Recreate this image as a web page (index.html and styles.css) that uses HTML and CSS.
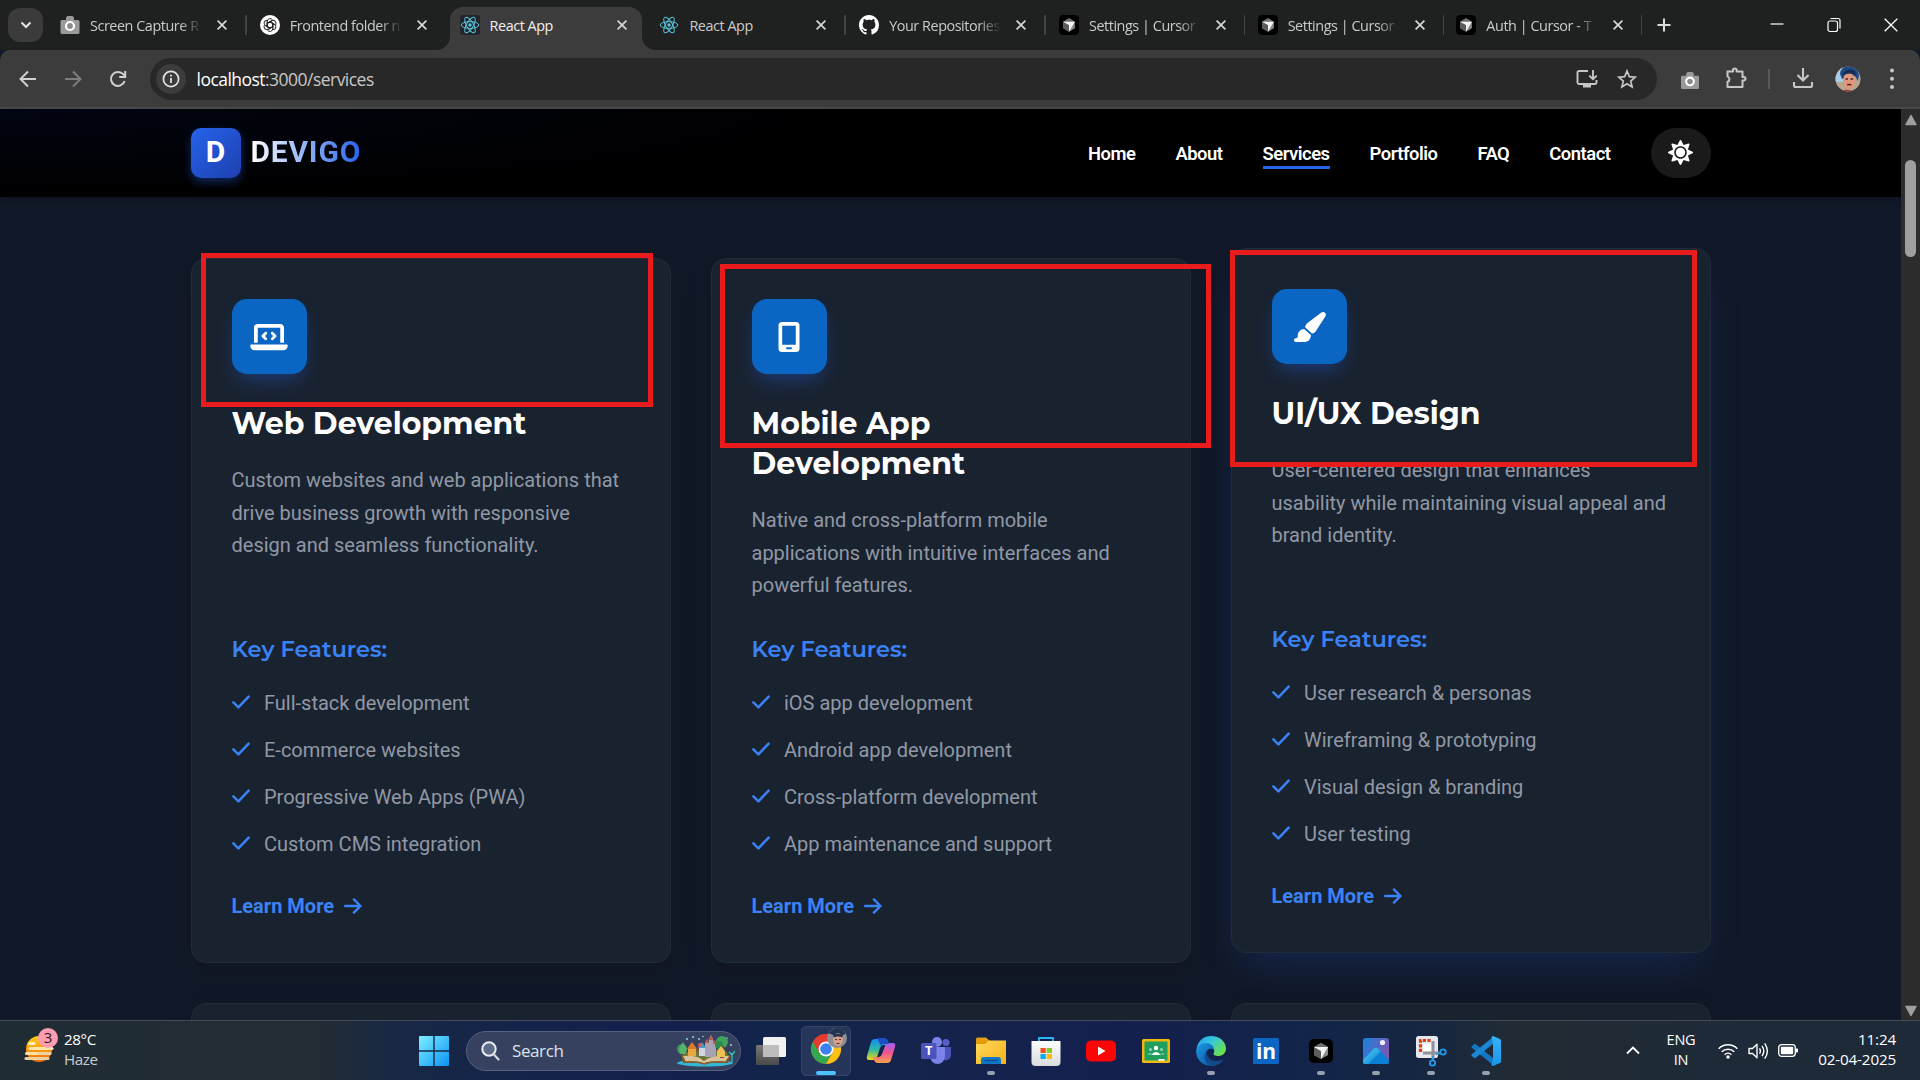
FILE: index.html
```html
<!DOCTYPE html>
<html lang="en">
<head>
<meta charset="utf-8">
<title>React App</title>
<link rel="stylesheet" href="styles.css">
</head>
<body>
<svg class="defs" aria-hidden="true">
  <defs>
    <linearGradient id="win" x1="0" y1="0" x2="1" y2="1"><stop offset="0" stop-color="#7df0ff"/><stop offset="1" stop-color="#0a93f5"/></linearGradient>
    <linearGradient id="haze" x1="0" y1="0" x2="0" y2="1"><stop offset="0" stop-color="#ffcf0e"/><stop offset="1" stop-color="#ee6c10"/></linearGradient>
    <linearGradient id="cpA" x1="0" y1="0" x2="0" y2="1"><stop offset="0" stop-color="#1a8cf0"/><stop offset=".5" stop-color="#2bb9a8"/><stop offset="1" stop-color="#f2d613"/></linearGradient>
    <linearGradient id="cpB" x1="0" y1="0" x2="0" y2="1"><stop offset="0" stop-color="#a25df0"/><stop offset=".5" stop-color="#f0568e"/><stop offset="1" stop-color="#ffa04c"/></linearGradient>
    <linearGradient id="fold" x1="0" y1="0" x2="1" y2="1"><stop offset="0" stop-color="#ffd95e"/><stop offset="1" stop-color="#f5b21a"/></linearGradient>
    <linearGradient id="edgeA" x1="0" y1="0" x2="1" y2=".6"><stop offset="0" stop-color="#1f9fe8"/><stop offset=".5" stop-color="#35c6dd"/><stop offset="1" stop-color="#6be04a"/></linearGradient>
    <linearGradient id="edgeB" x1="0" y1="0" x2="1" y2="1"><stop offset="0" stop-color="#1c9be6"/><stop offset="1" stop-color="#0c4f9e"/></linearGradient>
    <linearGradient id="pho" x1="0" y1="0" x2="1" y2=".4"><stop offset="0" stop-color="#1683dc"/><stop offset="1" stop-color="#7a58b4"/></linearGradient>
    <linearGradient id="phoM" x1="0" y1="0" x2="1" y2="1"><stop offset="0" stop-color="#4fd6fb"/><stop offset="1" stop-color="#0d79cf"/></linearGradient>
    <linearGradient id="bag" x1="0" y1="0" x2="0" y2="1"><stop offset="0" stop-color="#ffffff"/><stop offset="1" stop-color="#d9dadd"/></linearGradient>
    <linearGradient id="vs" x1="0" y1="0" x2="0" y2="1"><stop offset="0" stop-color="#35b5fb"/><stop offset="1" stop-color="#1c94e8"/></linearGradient>
    <linearGradient id="tvA" x1="0" y1="0" x2="0" y2="1"><stop offset="0" stop-color="#777"/><stop offset="1" stop-color="#4a4a4a"/></linearGradient>
  </defs>
  <symbol id="i-x" viewBox="0 0 12 12"><path d="M1.600 1.600l8.800 8.800M10.400 1.600l-8.800 8.800" stroke="currentColor" stroke-width="1.700" fill="none"/></symbol>
  <symbol id="i-camera" viewBox="0 0 20 20"><path d="M2 5h4V2.500L7.500 1h5L14 2.500V5h4a1.500 1.500 0 0 1 1.500 1.500v11A1.500 1.500 0 0 1 18 19H2a1.500 1.500 0 0 1-1.500-1.500v-11A1.500 1.500 0 0 1 2 5z" fill="#9a9a9a"/><circle cx="10" cy="11" r="4" fill="#8a8a8a" stroke="#fff" stroke-width="2.200"/></symbol>
  <symbol id="i-gpt" viewBox="0 0 20 20"><circle cx="10" cy="10" r="10" fill="#fff"/><g fill="none" stroke="#222" stroke-width="1"><path id="petal" d="M7.200 11.600V6.400a2.900 2.900 0 0 1 5.400-1.400M7.200 8.400L10 6.800l4.500 2.600"/><use href="#petal" transform="rotate(60 10 10)"/><use href="#petal" transform="rotate(120 10 10)"/><use href="#petal" transform="rotate(180 10 10)"/><use href="#petal" transform="rotate(240 10 10)"/><use href="#petal" transform="rotate(300 10 10)"/></g></symbol>
  <symbol id="i-react" viewBox="0 0 20 20"><g fill="none" stroke="#58c4dc" stroke-width="1"><ellipse cx="10" cy="10" rx="8.800" ry="3.400"/><ellipse cx="10" cy="10" rx="8.800" ry="3.400" transform="rotate(60 10 10)"/><ellipse cx="10" cy="10" rx="8.800" ry="3.400" transform="rotate(120 10 10)"/></g><circle cx="10" cy="10" r="1.700" fill="#58c4dc"/></symbol>
  <symbol id="i-github" viewBox="0 0 16 16"><path fill="#fff" d="M8 0C3.580 0 0 3.580 0 8c0 3.540 2.290 6.530 5.470 7.590.4.070.55-.17.55-.38 0-.19-.01-.82-.01-1.490-2.010.37-2.530-.49-2.690-.94-.09-.23-.48-.94-.82-1.130-.28-.15-.68-.52-.01-.53.63-.01 1.080.58 1.230.82.72 1.210 1.870.87 2.330.66.070-.52.28-.87.51-1.070-1.780-.2-3.640-.89-3.640-3.950 0-.87.31-1.590.82-2.150-.08-.2-.36-1.020.08-2.120 0 0 .67-.21 2.200.82.64-.18 1.320-.27 2-.27s1.360.09 2 .27c1.530-1.040 2.200-.82 2.200-.82.44 1.100.16 1.920.08 2.120.51.56.82 1.270.82 2.150 0 3.070-1.870 3.750-3.650 3.950.29.25.54.73.54 1.480 0 1.070-.01 1.930-.01 2.200 0 .21.15.46.55.38A8.010 8.010 0 0 0 16 8c0-4.420-3.580-8-8-8z"/></symbol>
  <symbol id="i-cursor" viewBox="0 0 24 24"><rect width="24" height="24" rx="5" fill="#000"/><path d="M12 4l7 4v8l-7 4-7-4V8z" fill="#8b8b8b"/><path d="M5 8l7 4v8l-7-4z" fill="#5d5d5d"/><path d="M12 4l7 4H5z" fill="#6f6f6f"/><path d="M5 8h14l-7 12v-8z" fill="#f3f3f3"/></symbol>
  <symbol id="i-check" viewBox="0 0 18 14"><path d="M1.400 7.300l5 5L16.600 1.600" stroke="#3b82f6" stroke-width="2.500" stroke-linecap="round" stroke-linejoin="round" fill="none"/></symbol>
  <symbol id="i-arrow" viewBox="0 0 18 16"><path d="M1.200 8h15.200M9.900 1.400L16.500 8l-6.600 6.600" stroke="#3b82f6" stroke-width="2.400" stroke-linecap="round" stroke-linejoin="round" fill="none"/></symbol>
</svg>

<div class="tabstrip">
  <button class="tab-search"><svg width="12" height="8" viewBox="0 0 12 8"><path d="M1.500 1.500L6 6l4.500-4.500" stroke="#e3e3e3" stroke-width="2" fill="none"/></svg></button>
  <div class="tabs">
    <div class="tab sep"><svg class="fav"><use href="#i-camera"/></svg><span class="ttl">Screen Capture R</span><svg class="x"><use href="#i-x"/></svg></div>
    <div class="tab"><svg class="fav"><use href="#i-gpt"/></svg><span class="ttl">Frontend folder n</span><svg class="x"><use href="#i-x"/></svg></div>
    <div class="tab active"><svg class="fav dark"><use href="#i-react"/></svg><span class="ttl short">React App</span><svg class="x"><use href="#i-x"/></svg></div>
    <div class="tab sep"><svg class="fav"><use href="#i-react"/></svg><span class="ttl short">React App</span><svg class="x"><use href="#i-x"/></svg></div>
    <div class="tab sep"><svg class="fav"><use href="#i-github"/></svg><span class="ttl">Your Repositories</span><svg class="x"><use href="#i-x"/></svg></div>
    <div class="tab sep"><svg class="fav"><use href="#i-cursor"/></svg><span class="ttl">Settings | Cursor</span><svg class="x"><use href="#i-x"/></svg></div>
    <div class="tab sep"><svg class="fav"><use href="#i-cursor"/></svg><span class="ttl">Settings | Cursor</span><svg class="x"><use href="#i-x"/></svg></div>
    <div class="tab sep"><svg class="fav"><use href="#i-cursor"/></svg><span class="ttl">Auth | Cursor - T</span><svg class="x"><use href="#i-x"/></svg></div>
  </div>
  <svg class="newtab" width="14" height="14" viewBox="0 0 14 14"><path d="M7 .5v13M.5 7h13" stroke="#dcdcdc" stroke-width="2"/></svg>
  <div class="winctl">
    <svg width="14" height="14" viewBox="0 0 14 14"><path d="M.5 6h13" stroke="#fff" stroke-width="1.200"/></svg>
    <svg width="14" height="16" viewBox="0 0 14 16"><rect x="1" y="4" width="9.500" height="10.500" rx="2" stroke="#fff" stroke-width="1.200" fill="none"/><path d="M3.500 1.500H11a2 2 0 0 1 2 2v8" stroke="#fff" stroke-width="1.200" fill="none"/></svg>
    <svg width="14" height="14" viewBox="0 0 14 14"><path d="M.7.7l12.600 12.600M13.300.7L.7 13.300" stroke="#fff" stroke-width="1.300"/></svg>
  </div>
</div>

<div class="toolbar">
  <div class="navbtns">
    <svg width="18" height="18" viewBox="0 0 18 18"><path d="M17 9H2M9 1.500L1.500 9 9 16.500" stroke="#d0d0d0" stroke-width="2" fill="none"/></svg>
    <svg width="18" height="18" viewBox="0 0 18 18"><path d="M1 9h15M9 1.500L16.500 9 9 16.500" stroke="#7d7d7d" stroke-width="2" fill="none"/></svg>
    <svg width="18" height="18" viewBox="0 0 18 18"><path d="M15.600 11.200A7 7 0 1 1 14.200 4.200l1.800 2" stroke="#d0d0d0" stroke-width="2" fill="none"/><path d="M16.200 1v6h-6" stroke="#d0d0d0" stroke-width="2" fill="none"/></svg>
  </div>
  <div class="omnibox">
    <span class="info"><svg width="18" height="18" viewBox="0 0 18 18"><circle cx="9" cy="9" r="7.600" stroke="#e3e3e3" stroke-width="1.700" fill="none"/><path d="M9 8v5M9 4.700v1.900" stroke="#e3e3e3" stroke-width="1.800"/></svg></span>
    <span class="url"><b>localhost</b>:3000/services</span>
    <svg class="install" width="22" height="20" viewBox="0 0 22 20"><path d="M12 2H3a1.500 1.500 0 0 0-1.500 1.500v10A1.500 1.500 0 0 0 3 15h16a1.500 1.500 0 0 0 1.500-1.500V11M17 1v9M13.300 6.600L17 10.200l3.700-3.600" stroke="#c7c7c7" stroke-width="1.900" fill="none"/><path d="M7 15h8v3.500H7z" fill="#c7c7c7"/></svg>
    <svg width="20" height="20" viewBox="0 0 20 20"><path d="M10 2l2.300 5.600 6 .5-4.600 3.900 1.400 5.900L10 14.800l-5.100 3.100 1.400-5.900L1.700 8.100l6-.5z" stroke="#c7c7c7" stroke-width="1.700" fill="none"/></svg>
  </div>
  <div class="actions">
    <svg class="cam" width="20" height="19" viewBox="0 0 20 20"><use href="#i-camera"/></svg>
    <svg class="puzzle" width="22" height="22" viewBox="0 0 22 22"><path d="M2.500 4.500H8V3.300a1.800 1.800 0 0 1 3.600 0v1.200h5.900V10h1.200a1.800 1.800 0 0 1 0 3.600h-1.200v6.400H2.500v-5.200a2.700 2.700 0 0 0 0-5.200z" stroke="#c7c7c7" stroke-width="2" fill="none" stroke-linejoin="round"/></svg>
    <i class="vsep"></i>
    <svg class="dl" width="22" height="22" viewBox="0 0 22 22"><path d="M11 1v12M5.500 8l5.500 5.500L16.500 8M2 15v3.500A1.500 1.500 0 0 0 3.500 20h15a1.500 1.500 0 0 0 1.500-1.500V15" stroke="#c7c7c7" stroke-width="2.100" fill="none"/></svg>
    <svg class="avatar" width="26" height="26" viewBox="0 0 26 26"><clipPath id="av"><circle cx="13" cy="13" r="12.500"/></clipPath><g clip-path="url(#av)"><rect width="26" height="26" fill="#b9a691"/><path d="M0 0h8v16H0z" fill="#a9cbe6"/><path d="M5 8q1-8 9-8t10 9l-1 6-3-5-13 3z" fill="#1d4a86"/><ellipse cx="14" cy="15" rx="6" ry="8" fill="#e0987c"/><path d="M7 9.500q2-6 8-6t6 6q-6-4-14 0z" fill="#152c55"/><path d="M5 26q4-3 9-2t8 2z" fill="#a2343c"/><path d="M10.500 13H13M15.500 13H18M12 19q2.200-1 4.500 0" stroke="#4a241c" stroke-width="1.300" fill="none"/></g></svg>
    <svg width="6" height="24" viewBox="0 0 6 24"><g fill="#c7c7c7"><circle cx="3" cy="3.500" r="2"/><circle cx="3" cy="11.800" r="2"/><circle cx="3" cy="20" r="2"/></g></svg>
  </div>
</div>

<div class="viewport">
  <div class="page">
    <header class="site-header">
      <div class="wrap">
        <div class="brand"><span class="mark">D</span><span class="name">DEVIGO</span></div>
        <nav class="menu"><a>Home</a><a>About</a><a class="on">Services</a><a>Portfolio</a><a>FAQ</a><a>Contact</a>
          <button class="theme"><svg width="25" height="25" viewBox="0 0 512 512"><path fill="#fff" d="M256 160c-52.900 0-96 43.100-96 96s43.100 96 96 96 96-43.100 96-96-43.100-96-96-96zm246.400 80.500l-94.700-47.300 33.500-100.400c4.500-13.600-8.400-26.500-21.900-21.900l-100.400 33.500-47.400-94.800c-6.400-12.800-24.600-12.800-31 0l-47.300 94.700L92.700 70.800c-13.600-4.500-26.500 8.400-21.900 21.900l33.500 100.400-94.700 47.400c-12.800 6.400-12.800 24.600 0 31l94.700 47.300-33.500 100.500c-4.500 13.600 8.400 26.500 21.900 21.900l100.400-33.500 47.300 94.700c6.400 12.800 24.600 12.800 31 0l47.300-94.700 100.400 33.500c13.600 4.500 26.500-8.400 21.900-21.900l-33.500-100.400 94.700-47.300c13-6.500 13-24.700.2-31.100zm-155.900 106c-49.900 49.900-131.100 49.900-181 0-49.900-49.900-49.900-131.100 0-181 49.900-49.900 131.100-49.900 181 0 49.900 49.900 49.900 131.100 0 181z"/></svg></button>
        </nav>
      </div>
    </header>
    <main class="services">
      <article class="card">
        <div class="ico"><svg width="38" height="30" viewBox="0 0 640 512"><path fill="#fff" d="M64 96c0-35.300 28.700-64 64-64H512c35.300 0 64 28.700 64 64V352H512V96H128V352H64V96zM0 403.200C0 392.600 8.600 384 19.200 384H620.800c10.600 0 19.200 8.600 19.200 19.200c0 42.400-34.400 76.800-76.800 76.800H76.800C34.400 480 0 445.600 0 403.200zM281 209l-31 31 31 31c9.400 9.400 9.400 24.600 0 33.900s-24.600 9.400-33.900 0l-48-48c-9.400-9.400-9.400-24.600 0-33.900l48-48c9.400-9.400 24.600-9.400 33.900 0s9.400 24.600 0 33.900zM393 175l48 48c9.400 9.400 9.400 24.600 0 33.900l-48 48c-9.400 9.400-24.600 9.400-33.900 0s-9.400-24.600 0-33.900l31-31-31-31c-9.400-9.400-9.400-24.600 0-33.900s24.600-9.400 33.900 0z"/></svg></div>
        <h3>Web Development</h3>
        <p>Custom websites and web applications that<br>drive business growth with responsive<br>design and seamless functionality.</p>
        <h4>Key Features:</h4>
        <ul>
          <li><svg><use href="#i-check"/></svg>Full-stack development</li>
          <li><svg><use href="#i-check"/></svg>E-commerce websites</li>
          <li><svg><use href="#i-check"/></svg>Progressive Web Apps (PWA)</li>
          <li><svg><use href="#i-check"/></svg>Custom CMS integration</li>
        </ul>
        <a class="more">Learn More <svg><use href="#i-arrow"/></svg></a>
      </article>
      <article class="card">
        <div class="ico"><svg width="22" height="30" viewBox="0 0 22 30"><path fill="#fff" fill-rule="evenodd" d="M4 0h14a3.500 3.500 0 0 1 3.500 3.500v23A3.500 3.500 0 0 1 18 30H4a3.500 3.500 0 0 1-3.500-3.500v-23A3.500 3.500 0 0 1 4 0zm.2 3.700v19h13.600v-19zm4.800 21.600a1 1 0 0 0 0 2h4a1 1 0 0 0 0-2z"/></svg></div>
        <h3>Mobile App<br>Development</h3>
        <p>Native and cross-platform mobile<br>applications with intuitive interfaces and<br>powerful features.</p>
        <h4>Key Features:</h4>
        <ul>
          <li><svg><use href="#i-check"/></svg>iOS app development</li>
          <li><svg><use href="#i-check"/></svg>Android app development</li>
          <li><svg><use href="#i-check"/></svg>Cross-platform development</li>
          <li><svg><use href="#i-check"/></svg>App maintenance and support</li>
        </ul>
        <a class="more">Learn More <svg><use href="#i-arrow"/></svg></a>
      </article>
      <article class="card lifted">
        <div class="ico"><svg width="34" height="30" viewBox="0 0 576 512"><path fill="#fff" d="M339.300 367.100c27.300-3.900 51.900-19.400 67.200-42.900L568.200 74.100c12.600-19.500 9.400-45.300-7.600-61.200S517.700-4.400 499.100 9.600L262.400 187.200c-24 18-38.200 46.100-38.400 76.100L339.300 367.100zm-19.600 25.400l-116-104.400C143.900 290.300 96 339.600 96 400c0 3.900 .2 7.800 .6 11.600C98.400 429.100 86.400 448 68.800 448H64c-17.700 0-32 14.300-32 32s14.300 32 32 32H208c61.900 0 112-50.100 112-112c0-2.500-.1-5-.2-7.500z"/></svg></div>
        <h3>UI/UX Design</h3>
        <p>User-centered design that enhances<br>usability while maintaining visual appeal and<br>brand identity.</p>
        <h4>Key Features:</h4>
        <ul>
          <li><svg><use href="#i-check"/></svg>User research &amp; personas</li>
          <li><svg><use href="#i-check"/></svg>Wireframing &amp; prototyping</li>
          <li><svg><use href="#i-check"/></svg>Visual design &amp; branding</li>
          <li><svg><use href="#i-check"/></svg>User testing</li>
        </ul>
        <a class="more">Learn More <svg><use href="#i-arrow"/></svg></a>
      </article>
      <article class="card"></article>
      <article class="card"></article>
      <article class="card"></article>
    </main>
  </div>
  <div class="scrollbar">
    <svg width="12" height="12" viewBox="0 0 12 12"><path d="M6 1.500L11 10.500H1z" fill="#9f9f9f" stroke="#9f9f9f" stroke-width="1.500" stroke-linejoin="round"/></svg>
    <i class="thumb"></i>
    <svg width="12" height="12" viewBox="0 0 12 12"><path d="M6 10.500L1 1.500h10z" fill="#9f9f9f" stroke="#9f9f9f" stroke-width="1.500" stroke-linejoin="round"/></svg>
  </div>
</div>

<div class="mark-box mb1"></div>
<div class="mark-box mb2"></div>
<div class="mark-box mb3"></div>

<footer class="taskbar">
  <div class="weather">
    <svg width="38" height="40" viewBox="0 0 38 40"><circle cx="17" cy="21" r="13" fill="url(#haze)"/><g fill="none" stroke-width="3.200" stroke-linecap="round"><path d="M8 15.500h4" stroke="#fff1c4"/><path d="M8 20.500h22" stroke="#ffe6a8"/><path d="M8 25.500h20M4 30.500h22" stroke="#ecd0a0"/></g><path d="M4.500 25.500h10" stroke="#ffe1a0" stroke-width="3" stroke-linecap="round"/><circle cx="26" cy="10" r="10" fill="#ff9db0"/><text x="26" y="15.200" text-anchor="middle" class="badge-n">3</text></svg>
    <div class="wx"><span>28°C</span><span class="dim">Haze</span></div>
  </div>
  <svg class="start" width="30" height="30" viewBox="0 0 30 30"><path fill="url(#win)" d="M1 0h13.300v14.300H0V1a1 1 0 0 1 1-1zM15.700 0H29a1 1 0 0 1 1 1v13.300H15.700zM0 15.700h14.300V30H1a1 1 0 0 1-1-1zM15.700 15.700H30V29a1 1 0 0 1-1 1H15.700z"/></svg>
  <div class="search">
    <svg width="19" height="20" viewBox="0 0 19 20"><circle cx="8" cy="8" r="6.700" stroke="#e9ebf2" stroke-width="2" fill="#5d6a88"/><path d="M12.500 13l5 5.500" stroke="#d7dae5" stroke-width="2.200" stroke-linecap="round"/></svg>
    <span>Search</span>
    <svg class="book" width="60" height="32" viewBox="0 0 60 32"><ellipse cx="30" cy="28" rx="28" ry="3.500" fill="#35b8d8"/><path d="M6 20l8-2 8-4h18l10 4 6 3-3 7H8z" fill="#7c5a2f"/><path d="M8 21q12-3 21 5Q38 18 54 21l-4 6q-13-2-21 1-9-3-18-1z" fill="#d9c49a"/><path d="M10 27q11-1 19 2 9-3 22-2" stroke="#8a5f35" stroke-width="1.400" fill="none"/><path d="M8 17h44v4q-14-1-22 4-9-5-22-4z" fill="#6b7a3c"/><path d="M30 22V8l2-4 2 4V4l2-4 2 4v4l1-3 2 4v13z" fill="#a8a3b4"/><path d="M32 4l-2 4h4zM36 0l-2 5h4zM40 5l-2 4h4z" fill="#c9543c"/><circle cx="47" cy="7" r="6" fill="#3fa45a"/><circle cx="44" cy="10" r="4" fill="#2c8a4d"/><path d="M46 11h3v12h-4z" fill="#7b4a2c"/><circle cx="7" cy="14" r="5" fill="#3b9a5c"/><path d="M4 14l4-7 4 7-2 5H5z" fill="#57b26b"/><path d="M13 21v-7l4-6 4 6v7z" fill="#e9a742"/><path d="M12 14l5-7 5 7z" fill="#db7a2b"/><path d="M42 22v-6l4-5 4 5v6z" fill="#f0c253"/><path d="M24 21v-8l3-4 3 4v8z" fill="#cfd5e4"/><path d="M23 13l4-6 4 6z" fill="#4d9ec4"/><g fill="#8ed0f5"><circle cx="12" cy="4" r="1"/><circle cx="18" cy="2" r="1"/><circle cx="24" cy="4" r="1"/><circle cx="28" cy="1.500" r=".8"/><circle cx="56" cy="10" r="1"/><circle cx="52" cy="3" r=".8"/></g><circle cx="25" cy="10" r="2" fill="#e05a4e"/><path d="M57 27v-9M54 17l3 3 3-4" stroke="#2fc7b7" stroke-width="1.300" fill="none"/></svg>
  </div>
  <div class="apps">
    <span class="app"><svg width="32" height="32" viewBox="0 0 32 32"><rect x="1" y="10" width="23" height="20" rx="1.500" fill="url(#tvA)"/><rect x="8" y="2" width="23" height="20" rx="1.500" fill="#f1f1f1"/><path d="M8 10h16v12H8z" fill="#bdbdbd"/></svg></span>
    <span class="app current"><svg width="40" height="40" viewBox="0 0 40 40"><g transform="translate(2 6)"><circle cx="15" cy="15" r="15" fill="#e33b2e"/><path d="M2 7.500A15 15 0 0 0 15 30l6.500-11.200L8.500 18.800z" fill="#34a853"/><path d="M15 30A15 15 0 0 0 28 7.500H15l6.500 11.300z" fill="#fbc116"/><path d="M2 7.500L8.500 18.800 15 7.500h13A15 15 0 0 0 2 7.500z" fill="#e33b2e"/><circle cx="15" cy="15" r="7.500" fill="#fff"/><circle cx="15" cy="15" r="5.800" fill="#3c80f0"/></g><circle cx="28" cy="10" r="10" fill="#8c8f96"/><path d="M19.500 5q4-5 10-5 5 1 7 6l-8 3z" fill="#20334f"/><ellipse cx="29" cy="11.500" rx="5" ry="6.500" fill="#d8a18b"/><path d="M24 7.500q5-4 10 0l-1 2q-4-2-8 0z" fill="#26324f"/><path d="M26 11.500h2M30 11.500h2M27.500 15.500h3" stroke="#5b2c28" stroke-width="1"/></svg></span>
    <span class="app"><svg width="30" height="28" viewBox="0 0 30 28"><path d="M9 2h9q3 0 4 3l1 3h-5q-3 0-4 3l-3 9q-1 3-4 3H3q-3 0-2-4L5 5q1-3 4-3z" fill="url(#cpA)"/><path d="M21 26h-9q-3 0-4-3l-1-3h5q3 0 4-3l3-8q1-3 4-3h4q3 0 2 4l-4 13q-1 3-4 3z" fill="url(#cpB)"/><path d="M11 1h7q3 0 4 3l1 3h-5q-2 0-3 2z" fill="#1b4fc4"/></svg></span>
    <span class="app"><svg width="32" height="30" viewBox="0 0 32 30"><circle cx="26" cy="6.500" r="3.500" fill="#5a5fc8"/><path d="M22 11h9v8a5.500 5.500 0 0 1-9 4z" fill="#4b53bc"/><circle cx="17" cy="6" r="5" fill="#7b83eb"/><path d="M10 11h15v9a7.500 8 0 0 1-15 0z" fill="#7b83eb"/><rect x="1" y="7" width="15.500" height="16" rx="1.500" fill="#4b53bc"/><text x="8.800" y="19.200" text-anchor="middle" class="tm">T</text></svg></span>
    <span class="app run"><svg width="32" height="30" viewBox="0 0 32 30"><path d="M1 3a1.500 1.500 0 0 1 1.500-1.500H11L15 5v6H1z" fill="#e39d0b"/><path d="M1 8h9l4-3.500h17v23.500H1z" fill="url(#fold)"/><path d="M6 28v-4a3 3 0 0 1 3-3h14a3 3 0 0 1 3 3v4z" fill="#0f78c8"/><path d="M9.500 24.500h13" stroke="#0b4f8a" stroke-width="1.500"/></svg></span>
    <span class="app"><svg width="30" height="30" viewBox="0 0 30 30"><path d="M8 7V2h14v5" stroke="#29b4f2" stroke-width="1.800" fill="none"/><path d="M.5 5h29v21a4 4 0 0 1-4 4h-21a4 4 0 0 1-4-4z" fill="url(#bag)"/><path d="M9.500 12h5.300v5H9.500z" fill="#f1511b"/><path d="M15.700 12H21v5h-5.300z" fill="#80cc28"/><path d="M9.500 18h5.300v5H9.500z" fill="#00adef"/><path d="M15.700 18H21v5h-5.300z" fill="#fbbc09"/></svg></span>
    <span class="app"><svg width="30" height="22" viewBox="0 0 30 22"><rect y=".5" width="30" height="21" rx="5" fill="#fb0505"/><path d="M12 6.500l7.500 4.500-7.500 4.500z" fill="#fff"/></svg></span>
    <span class="app"><svg width="28" height="24" viewBox="0 0 28 24"><rect width="28" height="24" rx="1.500" fill="#f3b80c"/><rect x="2.500" y="2.500" width="23" height="19" fill="#1f9e5e"/><circle cx="14" cy="9" r="2.200" fill="#fff"/><circle cx="8.500" cy="10.500" r="1.500" fill="#9ad3b4"/><circle cx="19.500" cy="10.500" r="1.500" fill="#9ad3b4"/><path d="M9 16q5-6 10 0z" fill="#fff"/><path d="M5.500 15.500q2.500-3 4 0zM18.500 15.500q2.500-3 4 0z" fill="#9ad3b4"/><path d="M16.500 20h6v1.800h-6z" fill="#fff"/></svg></span>
    <span class="app run"><svg width="30" height="30" viewBox="0 0 30 30"><path d="M.5 13C2 4 8 0 15 0c9 0 15 6 15 12.500 0 5-4 7.500-8 7.500-3 0-5-1-4.500-2.500 1-2 1-3 0-4.500C15 8 6 7 .5 13z" fill="url(#edgeA)"/><path d="M.1 16C0 10 5 7 10 7c5 0 8 3 8 6.500-5-2-8 1-8 5.500 0 5 4 8.500 9 10.300C9 32 .5 25 .1 16z" fill="url(#edgeB)"/><path d="M11 14.500c-1 7 5 11 10 10.500 3 0 5-1 6.500-2C26 27 21 30 16 30 9 29 6 19 11 14.500z" fill="#114a8b"/></svg></span>
    <span class="app"><svg width="26" height="26" viewBox="0 0 26 26"><rect width="26" height="26" rx="1.500" fill="#0a66c2"/><text x="13" y="21" text-anchor="middle" class="li">in</text></svg></span>
    <span class="app run"><svg width="24" height="24" viewBox="0 0 24 24"><use href="#i-cursor"/></svg></span>
    <span class="app run"><svg width="26" height="26" viewBox="0 0 26 26"><rect width="26" height="26" rx="2.500" fill="url(#pho)"/><path d="M0 22L11 10.500q2-2 4 0L26 22v2a2 2 0 0 1-2 2H2a2 2 0 0 1-2-2z" fill="#0c7fd6"/><path d="M0 22L11 10.500q2-2 4 0l3 3L5 26H2a2 2 0 0 1-2-2z" fill="url(#phoM)"/><circle cx="19.500" cy="4.500" r="2.600" fill="#f4ecff"/></svg></span>
    <span class="app run"><svg width="32" height="32" viewBox="0 0 32 32"><rect x="1" y="1" width="22" height="22" rx="2.500" fill="#e6e8ee"/><path d="M5.500 17V5.500H17" stroke="#d9400e" stroke-width="3.200" stroke-dasharray="3.200 1.400" fill="none"/><path d="M8.500 9h8v8h-8z" fill="#fff"/><path d="M18 6v18M8 18h16" stroke="#8d929b" stroke-width="3"/><circle cx="28" cy="17" r="2.700" fill="none" stroke="#1f9be8" stroke-width="1.800"/><circle cx="17.500" cy="28" r="2.700" fill="none" stroke="#1f9be8" stroke-width="1.800"/><path d="M21 19.500l4.500-1.500M18 25.500V21" stroke="#1f9be8" stroke-width="1.800"/></svg></span>
    <span class="app run"><svg width="30" height="30" viewBox="0 0 30 30"><path d="M.8 10.200l2-2a1.500 1.500 0 0 1 2 0L22 22v7L.8 11.800a1 1 0 0 1 0-1.600z" fill="#1177c4"/><path d="M.8 19.800l2 2a1.500 1.500 0 0 0 2 0L22 8V1L.8 18.200a1 1 0 0 0 0 1.600z" fill="#1a86d4"/><path d="M22 0l7 3q1 .5 1 1.500v21q0 1-1 1.500l-7 3q-1 0-1.500-.7L22 22V8L20.500.7z" fill="url(#vs)"/></svg></span>
  </div>
  <div class="tray">
    <svg width="14" height="9" viewBox="0 0 14 9"><path d="M1 7.500L7 1.500l6 6" stroke="#fff" stroke-width="1.800" fill="none"/></svg>
    <div class="lang"><span>ENG</span><span>IN</span></div>
    <svg class="wifi" width="20" height="16" viewBox="0 0 20 16"><g fill="none" stroke="#fff" stroke-width="1.500"><path d="M.7 5.700a13.200 13.200 0 0 1 18.600 0"/><path d="M3.700 8.800a9 9 0 0 1 12.600 0"/><path d="M6.600 11.700a4.900 4.900 0 0 1 6.800 0"/></g><circle cx="10" cy="14" r="1.700" fill="#fff"/></svg>
    <svg class="snd" width="21" height="18" viewBox="0 0 21 18"><g fill="none" stroke="#fff" stroke-width="1.400"><path d="M1 6.500h3.500L9 2.300v13.400L4.500 11.500H1z" stroke-linejoin="round"/><path d="M11.500 6.300q1.800 2.700 0 5.400M14 3.800q3.600 5.200 0 10.400M16.700 1.300q5.400 7.700 0 15.400"/></g></svg>
    <svg class="bat" width="20" height="13" viewBox="0 0 20 13"><rect x=".7" y=".7" width="16.600" height="11.600" rx="3" fill="none" stroke="#fff" stroke-width="1.300"/><rect x="2.800" y="2.800" width="12.400" height="7.400" rx="1" fill="#fff"/><path d="M18 4.500h1.200q.8 0 .8.800v2.400q0 .8-.8.800H18z" fill="#fff"/></svg>
    <div class="clock"><span>11:24</span><span>02-04-2025</span></div>
  </div>
</footer>
</body>
</html>
```
FILE: styles.css
```css
* { box-sizing: border-box; }
body { margin: 0; width: 1920px; height: 1080px; overflow: hidden; display: flex; flex-direction: column; background: #111827; font-family: Roboto, sans-serif; position: relative; }
button { border: 0; padding: 0; }
.defs { position: absolute; width: 0; height: 0; }

/* browser tabs */
.tabstrip { flex: none; height: 50px; background: #1f2120; display: flex; align-items: center; font-family: "Open Sans", "Noto Sans", sans-serif; padding-left: 8px; }
.tab-search { width: 35px; height: 34px; border-radius: 12px; background: #3b3b3b; display: flex; align-items: center; justify-content: center; }
.tabs { display: flex; align-self: stretch; margin-left: 4px; }
.tab { width: 199.800px; height: 50px; display: flex; align-items: center; padding-left: 13px; color: #c9cbca; position: relative; }
.tab:nth-child(n+6) { width: 198.700px; }
.tab .fav { width: 20px; height: 20px; flex: none; }
.fav.dark { background: #22252a; border-radius: 3px; }
.tab .ttl { flex: none; width: 118px; margin-left: 10px; font-size: 14.400px; letter-spacing: -.45px; line-height: 20px; white-space: nowrap; mask-image: linear-gradient(to right, #000 76%, transparent 95%); padding-top: 1px; }
.tab .ttl.short { mask-image: none; }
.tab .x { flex: none; width: 12px; height: 12px; margin-left: 8px; color: #d5d7d6; }
.tab.sep::after { content: ""; width: 2px; height: 20px; border-radius: 1px; background: #424443; margin-left: 17px; }
.tab.active { color: #f0f0f0; }
.tab.active::before { content: ""; position: absolute; z-index: 0; left: 3px; right: 4px; top: 7px; bottom: 0; background: #3c3c3c; border-radius: 13px 13px 0 0; }
.tab.active::after { content: ""; position: absolute; left: -10px; right: -9px; bottom: 0; height: 13px; background: radial-gradient(circle at 0 0, transparent 12.500px, #3c3c3c 13px) left / 13px 13px no-repeat, radial-gradient(circle at 100% 0, transparent 12.500px, #3c3c3c 13px) right / 13px 13px no-repeat; }
.tab.active > * { position: relative; z-index: 1; }
.newtab { margin-left: 15px; }
.winctl { display: flex; margin-left: auto; margin-right: 22px; gap: 43px; align-items: center; }

/* browser toolbar */
.toolbar { flex: none; height: 59px; background: #3c3c3c; border-bottom: 2px solid #474948; border-radius: 10px 10px 0 0; display: flex; align-items: center; padding: 0 25px 0 19px; }
.navbtns { display: flex; gap: 27px; width: 131px; }
.omnibox { width: 1507px; height: 42px; border-radius: 21px; background: #282828; display: flex; align-items: center; padding: 0 20px 0 6px; }
.info { width: 30px; height: 30px; border-radius: 50%; background: #3c3c3c; display: flex; align-items: center; justify-content: center; }
.url { flex: 1; margin-left: 10.500px; padding-top: 1px; font: 17.500px "Open Sans", "Noto Sans", sans-serif; letter-spacing: -.53px; color: #c7c7c7; }
.url b { font-weight: 400; color: #fff; }
.install { margin-right: 19px; }
.actions { flex: 1; display: flex; align-items: center; margin-left: 23px; }
.cam { margin-top: 3px; }
.puzzle { margin-left: 25px; margin-top: -1px; }
.vsep { width: 2px; height: 20px; background: #5a5a5a; margin-left: 21px; }
.dl { margin-left: 22px; margin-top: -1px; }
.avatar { margin-left: 21px; margin-right: auto; }

/* page */
.viewport { flex: 1; min-height: 0; display: flex; overflow: hidden; }
.page { width: 1901px; height: 100%; overflow: hidden; background: #111827; }
.site-header { height: 88px; background: radial-gradient(ellipse 900px 90px at 0 0, #020512, #010207 55%, #000); box-shadow: 0 2px 6px rgba(0,0,0,.25); position: relative; }
.wrap { width: 1520px; margin: 0 auto; height: 88px; display: flex; align-items: center; justify-content: space-between; }
.brand { display: flex; align-items: center; gap: 10px; font-weight: 700; font-size: 30px; line-height: 36px; }
.mark { width: 50px; height: 50px; border-radius: 10px; background: linear-gradient(135deg, #2563eb, #1e40af); box-shadow: 0 4px 10px rgba(37,99,235,.4); color: #fff; display: flex; align-items: center; justify-content: center; padding-bottom: 2px; }
.name { margin-top: -2px; letter-spacing: .8px; background: linear-gradient(90deg, #fff, #2563eb); -webkit-background-clip: text; background-clip: text; color: transparent; }
.menu { display: flex; align-items: center; gap: 40px; color: #fff; font-weight: 600; font-size: 18.400px; letter-spacing: -.48px; line-height: 24px; }
.menu a { padding: 4px 0 0; border-bottom: 3px solid transparent; }
.menu a.on { border-color: #2563eb; }
.theme { width: 60px; height: 50px; border-radius: 25px; background: #1a1a1a; display: flex; align-items: center; justify-content: center; padding-bottom: 1px; }
.services { display: grid; grid-template-columns: repeat(3, 480px); grid-auto-rows: 705px; gap: 40px; justify-content: center; padding-top: 61px; }
.card { background: #19222f; border: 1px solid #212b3a; border-radius: 15px; padding: 40px; display: flex; flex-direction: column; align-items: flex-start; box-shadow: 0 10px 30px rgba(0,0,0,.1); color: #9198a5; font-size: 20px; }
.card.lifted { transform: translateY(-10px); box-shadow: 0 20px 40px -10px rgba(37,99,235,.2); }
.ico { width: 75px; height: 75px; border-radius: 15px; background: #0a66c2; box-shadow: 0 10px 20px -5px rgba(37,99,235,.4); display: flex; align-items: center; justify-content: center; }
.card h3 { margin: 30px 0 20px; font: 700 30px/40px Montserrat, Inter, sans-serif; color: #fff; white-space: nowrap; }
.card p { margin: 0; flex: 1; line-height: 32.600px; white-space: nowrap; }
.card h4 { margin: 0 0 22px; font: 600 22.500px/31px Montserrat, Inter, sans-serif; color: #3b82f6; }
.card ul { list-style: none; margin: 0 0 29px; padding: 0; display: grid; gap: 14px; }
.card li { display: flex; align-items: center; line-height: 33px; white-space: nowrap; }
.card li svg { width: 18px; height: 14px; margin: -3px 14.500px 0 0; }
.more { display: flex; align-items: center; gap: 10px; font-weight: 700; line-height: 32px; color: #3b82f6; }
.more svg { width: 18px; height: 16px; }

.scrollbar { width: 19px; background: #2c2c2c; display: flex; flex-direction: column; align-items: center; padding: 5px 0 3px; }
.scrollbar .thumb { width: 11px; height: 97px; border-radius: 6px; background: #9f9f9f; margin: 34px 0 auto; }

/* annotation rectangles drawn over the page */
.mark-box { position: absolute; border: 5px solid #e81c1c; }
.mb1 { left: 201px; top: 253px; width: 452px; height: 154px; }
.mb2 { left: 720px; top: 264px; width: 491px; height: 184px; }
.mb3 { left: 1230px; top: 250px; width: 467px; height: 217px; }

/* taskbar */
.taskbar { flex: none; height: 60px; border-top: 1px solid #454b58; background: linear-gradient(90deg, #202c34 0, #222c35 320px, #182845 400px, #14234a 530px, #141f4e 700px, #12244a 760px, #15234c 950px, #141f4e 1120px, #122548 1330px, #17273f 1440px, #222c34 1520px, #1e2a37 1700px, #1e2a37 100%); display: flex; align-items: center; font-family: "Open Sans", "Noto Sans", sans-serif; font-size: 14.500px; color: #fff; }
.weather { width: 419px; padding-left: 22px; display: flex; align-items: center; gap: 4px; }
.weather svg { margin-top: -6px; }
.badge-n { font: 15px "Open Sans", sans-serif; fill: #222; }
.wx, .lang, .clock { display: flex; flex-direction: column; line-height: 20px; }
.wx, .clock { font-size: 15.200px; margin-top: -3px; }
.wx { letter-spacing: -.4px; }
.dim { color: #c9cdd2; }
.start { margin-right: 17px; }
.search { width: 275px; height: 40px; border-radius: 20px; border: 1px solid #55627f; background: #35415f; display: flex; align-items: center; padding: 0 5px 0 14px; }
.search span { flex: 1; margin-left: 12px; font-size: 17px; letter-spacing: -.4px; color: #dfe2ea; }
.apps { display: flex; margin-left: 5px; gap: 5px; }
.app { width: 50px; height: 50px; border-radius: 5px; display: flex; align-items: center; justify-content: center; position: relative; }
.app.current { background: #26365a; border: 1px solid #35446a; }
.app.current svg { margin: -6px 0 0 6px; }
.app.run::after, .app.current::after { content: ""; position: absolute; bottom: 1px; left: 21px; width: 8px; height: 4px; border-radius: 2px; background: #989fb0; }
.app.current::after { left: 14px; width: 20px; bottom: 0; background: #4cc2ff; }
.tm { font: 700 13px "Open Sans", sans-serif; fill: #fff; }
.li { font: 700 21px "Open Sans", sans-serif; fill: #fff; }
.tray { flex: 1; display: flex; align-items: center; justify-content: flex-end; padding-right: 24px; }
.lang { align-items: center; margin-left: 26px; width: 30px; letter-spacing: -.2px; margin-top: -1px; }
.wifi { margin-left: 22px; }
.snd { margin-left: 10px; }
.bat { margin-left: 9px; }
.clock { align-items: flex-end; width: 78px; margin-left: 20px; letter-spacing: -.15px; white-space: nowrap; }
```
